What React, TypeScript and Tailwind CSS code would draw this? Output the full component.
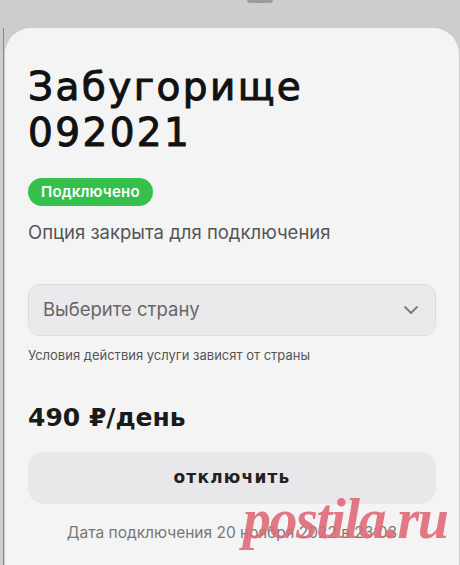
import { ChevronDown } from 'lucide-react'

const wide = { fontFamily: '"DejaVu Sans", "Liberation Sans", sans-serif' }

export default function App() {
  return (
    <div className="relative h-[565px] w-[460px] overflow-hidden bg-[#cdcdcd]" style={{ fontFamily: 'Inter, "Liberation Sans", sans-serif' }}>
      {/* sheet handle peeking from behind */}
      <div className="absolute left-[247px] top-0 h-[3px] w-[26px] rounded-b bg-[#9b9b9b]" />

      <div className="flex h-full pl-[3px] pt-[28px] pr-[1px]">
        <div className="flex-1 border-l border-[#8a8a8a] pl-px">
          <div className="flex h-full flex-col rounded-t-[26px] bg-[#f4f4f5] px-[23px] pt-[36px]">
            <h1
              className="text-[39px] font-normal leading-[46px] tracking-[2.4px] text-[#111] [-webkit-text-stroke:1px_#111]"
              style={wide}
            >
              Забугорище
              <br />
              092021
            </h1>

            <div className="mt-[22px] flex">
              <span className="rounded-full bg-[#35c04c] px-[13px] py-[4px] text-[15px] font-semibold leading-[20px] tracking-[0.2px] text-white">
                Подключено
              </span>
            </div>

            <p className="mt-[13px] text-[18.5px] leading-[26px] text-[#555]">Опция закрыта для подключения</p>

            <button className="mt-[39px] flex h-[52px] w-full items-center justify-between rounded-[12px] border border-[#dcdce0] bg-[#eaeaed] pl-[14px] pr-[12px] text-left">
              <span className="text-[18.5px] text-[#666]">Выберите страну</span>
              <ChevronDown className="h-[24px] w-[24px] text-[#7a7a7e]" strokeWidth={1.8} />
            </button>

            <p className="mt-[10px] text-[13px] leading-[18px] text-[#555]">Условия действия услуги зависят от страны</p>

            <div className="mt-[38px] text-[25px] font-bold leading-[32px] text-[#1a1a1a]" style={wide}>
              490 ₽/день
            </div>

            <button
              className="mt-[18px] h-[52px] w-full rounded-[16px] bg-[#e8e8eb] text-[17px] font-bold tracking-[1.2px] text-[#222]"
              style={wide}
            >
              отключить
            </button>

            <p className="mt-[18px] text-center text-[15.5px] leading-[22px] text-[#777]">
              Дата подключения 20 ноября 2022 в 23:03
            </p>
          </div>
        </div>
      </div>

      {/* watermark */}
      <div
        className="pointer-events-none absolute left-[243px] top-[491px] text-[56px] font-bold italic leading-none tracking-[-1.5px] text-[#df6b78] opacity-90"
        style={{ fontFamily: '"Liberation Serif", serif' }}
      >
        postila.ru
      </div>
    </div>
  )
}
